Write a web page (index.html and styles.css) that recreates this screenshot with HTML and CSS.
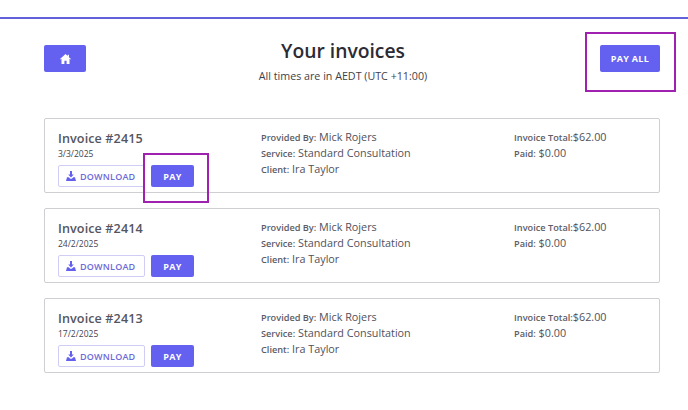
FILE: index.html
```html
<!DOCTYPE html>
<html lang="en">
<head>
<meta charset="utf-8">
<title>Your invoices</title>
<link rel="stylesheet" href="styles.css">
</head>
<body>
<main class="page">
  <header class="header">
    <a class="btn btn-solid btn-home" aria-label="Home">
      <svg width="11" height="10" viewBox="0 0 12 11"><path fill="#fff" d="M6 0 0 5.400l.6.7L1.600 5.300V11h3.200V7.400h2.400V11h3.200V5.300l1 .8.6-.7L9.800 3.500V.8H8.400v1.400L6 0Z"/></svg>
    </a>
    <div class="heading">
      <h1>Your invoices</h1>
      <p>All times are in AEDT (UTC +11:00)</p>
    </div>
    <a class="btn btn-solid btn-payall">PAY ALL</a>
  </header>
  <section class="list">
    <article class="card">
      <div class="col-main">
        <h2>Invoice #2415</h2>
        <div class="date">3/3/2025</div>
        <div class="actions">
          <a class="btn btn-outline"><svg width="10" height="10" viewBox="0 0 10 10"><path fill="#6360ee" d="M4 0h2v3.500h1.800L5 6.500 2.200 3.500H4V0ZM1 6.200h1.700L4.200 7.800h1.600l1.500-1.600H9L10 10H0L1 6.200Z"/></svg>DOWNLOAD</a>
          <a class="btn btn-solid btn-pay">PAY</a>
        </div>
      </div>
      <div class="col-info">
        <div><b>Provided By:</b> Mick Rojers</div>
        <div><b>Service:</b> Standard Consultation</div>
        <div><b>Client:</b> Ira Taylor</div>
      </div>
      <div class="col-total">
        <div><b>Invoice Total:</b>$62.00</div>
        <div><b>Paid:</b> $0.00</div>
      </div>
    </article>
    <article class="card">
      <div class="col-main">
        <h2>Invoice #2414</h2>
        <div class="date">24/2/2025</div>
        <div class="actions">
          <a class="btn btn-outline"><svg width="10" height="10" viewBox="0 0 10 10"><path fill="#6360ee" d="M4 0h2v3.500h1.800L5 6.500 2.200 3.500H4V0ZM1 6.200h1.700L4.200 7.800h1.600l1.500-1.600H9L10 10H0L1 6.200Z"/></svg>DOWNLOAD</a>
          <a class="btn btn-solid btn-pay">PAY</a>
        </div>
      </div>
      <div class="col-info">
        <div><b>Provided By:</b> Mick Rojers</div>
        <div><b>Service:</b> Standard Consultation</div>
        <div><b>Client:</b> Ira Taylor</div>
      </div>
      <div class="col-total">
        <div><b>Invoice Total:</b>$62.00</div>
        <div><b>Paid:</b> $0.00</div>
      </div>
    </article>
    <article class="card">
      <div class="col-main">
        <h2>Invoice #2413</h2>
        <div class="date">17/2/2025</div>
        <div class="actions">
          <a class="btn btn-outline"><svg width="10" height="10" viewBox="0 0 10 10"><path fill="#6360ee" d="M4 0h2v3.500h1.800L5 6.500 2.200 3.500H4V0ZM1 6.200h1.700L4.200 7.800h1.600l1.500-1.600H9L10 10H0L1 6.200Z"/></svg>DOWNLOAD</a>
          <a class="btn btn-solid btn-pay">PAY</a>
        </div>
      </div>
      <div class="col-info">
        <div><b>Provided By:</b> Mick Rojers</div>
        <div><b>Service:</b> Standard Consultation</div>
        <div><b>Client:</b> Ira Taylor</div>
      </div>
      <div class="col-total">
        <div><b>Invoice Total:</b>$62.00</div>
        <div><b>Paid:</b> $0.00</div>
      </div>
    </article>
  </section>
</main>
<div class="mark mark-payall"></div>
<div class="mark mark-pay"></div>
</body>
</html>
```
FILE: styles.css
```css
* { box-sizing: border-box; }
html, body { margin: 0; height: 100%; background: #fff; overflow: hidden; }
body {
  position: relative;
  font-family: "Open Sans", "Noto Sans", sans-serif;
  color: #4b4b57;
  padding-top: 17px;
}
.page {
  border-top: 2px solid #6360dc;
  padding: 26px 28px 0 44px;
}
.header {
  display: flex;
  justify-content: space-between;
  align-items: flex-start;
  height: 73px;
}
.heading { text-align: center; margin-top: -8px; flex: 1; }
.heading h1 {
  margin: 0;
  font-size: 19.300px;
  line-height: 27px;
  font-weight: 600;
  color: #2b2b36;
}
.heading p {
  margin: 5px 0 0;
  font-size: 10.700px;
  line-height: 14px;
  color: #3f3f4a;
}
.btn {
  display: inline-flex;
  align-items: center;
  justify-content: center;
  border-radius: 2px;
  font-size: 9px;
  font-weight: 700;
  letter-spacing: .3px;
}
.btn-solid { background: #6460f0; color: #fff; }
.btn-home { width: 42px; height: 27px; }
.btn-payall { width: 60px; height: 27px; }
.btn-pay { width: 43px; height: 22px; }
.btn-outline {
  width: 87px;
  height: 22px;
  gap: 4px;
  padding-left: 7px;
  justify-content: flex-start;
  border: 1px solid #cfcdf6;
  background: #fff;
  color: #6d6ad8;
  font-weight: 600;
  letter-spacing: .2px;
}
.list { display: flex; flex-direction: column; gap: 15px; }
.card {
  display: flex;
  height: 75px;
  padding: 0 13px;
  border: 1px solid #cfcfd3;
  border-radius: 2px;
}
.col-main { width: 203px; padding-top: 11px; }
.col-main h2 {
  margin: 0;
  font-size: 12.600px;
  line-height: 18px;
  font-weight: 600;
  color: #55555f;
  letter-spacing: .1px;
}
.date { font-size: 8.500px; line-height: 12px; color: #44444e; }
.actions { display: flex; gap: 6px; margin-top: 5px; }
.col-info { width: 253px; padding-top: 10px; }
.col-total { padding-top: 10px; }
.col-info div, .col-total div {
  height: 16px;
  font-size: 10.800px;
  line-height: 16px;
  color: #50505a;
  white-space: nowrap;
}
.col-info b, .col-total b { font-size: 9.200px; line-height: 1; font-weight: 600; color: #5c5c66; }
.mark { position: absolute; border: 2px solid #a020b0; }
.mark-payall { left: 585px; top: 32px; width: 91px; height: 60px; }
.mark-pay { left: 143px; top: 153px; width: 66px; height: 50px; }
```
